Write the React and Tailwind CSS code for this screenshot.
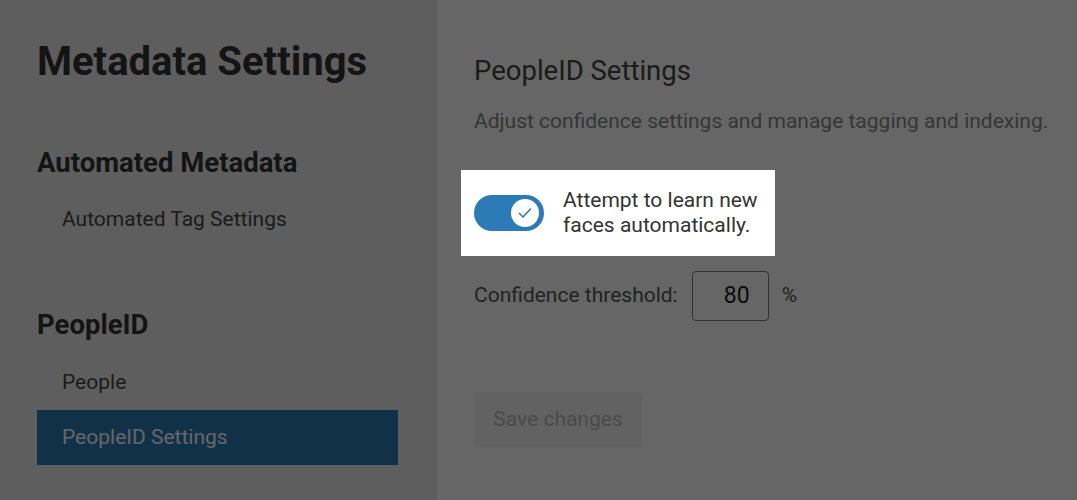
import React from "react";

function Toggle() {
  return (
    <div className="flex h-[36px] w-[70px] shrink-0 items-center justify-end rounded-full bg-[#2c7ab6] pr-[5px]">
      <div className="flex h-[28px] w-[28px] items-center justify-center rounded-full bg-white">
        <svg width="14" height="12" viewBox="0 0 14 12" fill="none">
          <path d="M1.5 6.5 L5 10 L12.5 2" stroke="#2c7ab6" strokeWidth="1.6" strokeLinecap="round" strokeLinejoin="round" />
        </svg>
      </div>
    </div>
  );
}

export default function App() {
  return (
    <div
      className="relative flex h-[500px] w-full overflow-hidden bg-white"
      style={{ fontFamily: "Roboto, 'Noto Sans', sans-serif" }}
    >
      <aside className="w-[437px] shrink-0 border-r border-[#e4e4e4] bg-[#ececec] pl-[37px] pr-[38px] pt-[38px]">
        <h1 className="text-[40px] font-bold leading-[48px] text-[#333]">Metadata Settings</h1>
        <h2 className="mt-[61px] text-[27.5px] font-bold leading-[32px] text-[#333]">Automated Metadata</h2>
        <div className="mt-[13px] flex h-[55px] items-center pl-[25px] text-[21px] text-[#444]">Automated Tag Settings</div>
        <h2 className="mt-[62px] text-[27.5px] font-bold leading-[32px] text-[#333]">PeopleID</h2>
        <div className="mt-[14px] flex h-[55px] items-center pl-[25px] text-[21px] text-[#444]">People</div>
        <div className="flex h-[55px] items-center bg-[#2c7ab6] pl-[25px] text-[21px] text-white">PeopleID Settings</div>
      </aside>
      <main className="flex-1 pl-[37px] pt-[55px]">
        <h2 className="text-[27.5px] leading-[32px] text-[#444]">PeopleID Settings</h2>
        <p className="mt-[20px] text-[21px] leading-[28px] text-[#888]">
          Adjust confidence settings and manage tagging and indexing.
        </p>
        <div className="relative z-20 -ml-[13px] mt-[35px] flex h-[86px] w-[314px] items-center gap-[19px] bg-white pl-[13px]">
          <Toggle />
          <div className="text-[21px] leading-[25px] text-[#333]">
            Attempt to learn new
            <br />
            faces automatically.
          </div>
        </div>
        <div className="mt-[15px] flex items-center">
          <span className="text-[21px] text-[#555]">Confidence threshold:</span>
          <div className="ml-[14px] flex h-[50px] w-[77px] items-center justify-end rounded-[4px] border border-[#7a7a7a] pr-[18px] text-[23px] text-[#222]">
            80
          </div>
          <span className="ml-[13px] text-[21px] text-[#555]">%</span>
        </div>
        <button className="mt-[71px] flex h-[55px] w-[168px] items-center justify-center rounded-[4px] bg-[#f4f4f4] text-[21px] text-[#bbb]">
          Save changes
        </button>
      </main>
      <div className="pointer-events-none absolute inset-0 z-10 bg-black/60" />
    </div>
  );
}
